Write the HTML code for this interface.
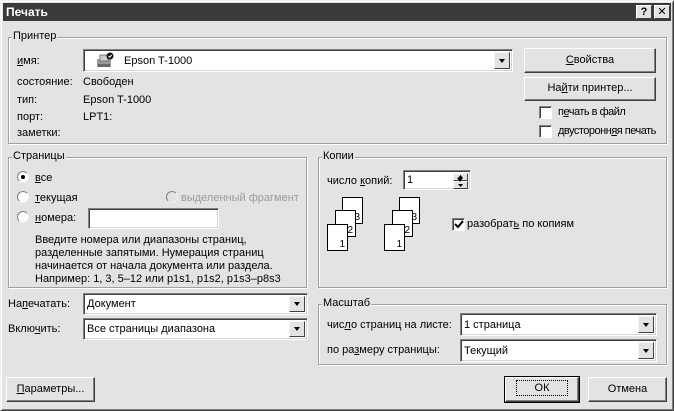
<!DOCTYPE html>
<html><head><meta charset="utf-8"><style>
*{box-sizing:border-box;margin:0;padding:0}
body{width:674px;height:411px;background:#e3e3e3;font-family:"Liberation Sans","DejaVu Sans",sans-serif;font-size:11px;color:#000;position:relative;overflow:hidden}
.a{position:absolute;white-space:nowrap}
.win{position:absolute;left:0;top:0;width:674px;height:411px;border:1px solid;border-color:#f0f0f0 #404040 #404040 #f0f0f0;box-shadow:inset 1px 1px 0 #fff,inset -1px -1px 0 #808080}
.title{position:absolute;left:3px;top:3px;width:668px;height:18px;background:#3a3a3a;color:#fff;font-weight:bold;font-size:12px;padding:2px 3px}
.tb{position:absolute;top:5px;width:16px;height:14px;background:#e3e3e3;border:1px solid;border-color:#fff #404040 #404040 #fff;font-weight:bold;font-size:11px;text-align:center;line-height:12px;color:#000}
.grp{position:absolute;border:1px solid #a0a0a0;box-shadow:1px 1px 0 #fff,inset 1px 1px 0 #fff}
.gl{position:absolute;background:#e3e3e3;padding:0 1px;top:-8px;left:3px}
.inp{position:absolute;background:#fff;border:1px solid;border-color:#808080 #fff #fff #808080;box-shadow:inset 1px 1px 0 #404040,inset -1px -1px 0 #d4d4d4;padding:4px 3px 3px;white-space:nowrap}
.dd{position:absolute;right:2px;top:2px;bottom:2px;width:16px;background:#e3e3e3;border:1px solid;border-color:#f4f4f4 #404040 #404040 #f4f4f4}
.dd:after{content:"";position:absolute;left:4px;top:50%;margin-top:-2px;border:3px solid transparent;border-top:4px solid #000;border-bottom:0}
.btn{position:absolute;background:#e3e3e3;border:1px solid;border-color:#fff #404040 #404040 #fff;box-shadow:inset -1px -1px 0 #808080;text-align:center}
.cb{position:absolute;width:13px;height:13px;background:#fff;border:1px solid;border-color:#808080 #fff #fff #808080;box-shadow:inset 1px 1px 0 #404040}
.rb{position:absolute;width:12px;height:12px;border-radius:50%;background:#fff;border:1px solid;border-color:#808080 #f0f0f0 #f0f0f0 #808080}
.pg{position:absolute;width:21px;height:27px;background:#fff;border:1px solid #000;font-size:10px;text-align:right;padding-right:2px;line-height:10px;padding-top:15px}
u{text-decoration:underline}
.n{letter-spacing:-0.5px}
</style></head><body>
<div class="win"></div>
<div class="title">Печать</div>
<div class="tb" style="left:636px">?</div>
<div class="tb" style="left:654px">✕</div>

<div class="grp" style="left:8px;top:37px;width:659px;height:107px"><span class="gl">Принтер</span></div>
<div class="a" style="left:17px;top:55px"><u>и</u>мя:</div>
<div class="inp" style="left:83px;top:49px;width:430px;height:23px;padding-left:40px;padding-top:5px">Epson T-1000<div class="dd"></div></div>
<svg class="a" style="left:95px;top:52px" width="20" height="17"><rect x="2" y="7" width="14" height="8" fill="#999"/><rect x="5" y="3" width="8" height="6" fill="#ccc" stroke="#777"/><rect x="3" y="12" width="12" height="3" fill="#666"/><circle cx="15" cy="4" r="3.5" fill="#111"/><path d="M13.5 4l1.2 1.3 2-2.3" stroke="#fff" fill="none"/></svg>
<div class="a" style="left:17px;top:76px">состояние:</div><div class="a" style="left:83px;top:76px">Свободен</div>
<div class="a" style="left:17px;top:94px">тип:</div><div class="a" style="left:83px;top:94px">Epson T-1000</div>
<div class="a" style="left:17px;top:111px">порт:</div><div class="a" style="left:83px;top:111px">LPT1:</div>
<div class="a" style="left:17px;top:127px">заметки:</div>
<div class="btn" style="left:524px;top:48px;width:132px;height:25px;line-height:22px"><u>С</u>войства</div>
<div class="btn" style="left:524px;top:77px;width:132px;height:24px;line-height:21px">На<u>й</u>ти принтер...</div>
<div class="cb" style="left:539px;top:106px"></div><div class="a n" style="left:558px;top:106px">п<u>е</u>чать в файл</div>
<div class="cb" style="left:539px;top:125px"></div><div class="a n" style="left:558px;top:125px">двусторонн<u>я</u>я печать</div>

<div class="grp" style="left:8px;top:157px;width:299px;height:131px"><span class="gl">Страницы</span></div>
<div class="rb" style="left:17px;top:171px"><div style="position:absolute;left:3px;top:3px;width:4px;height:4px;border-radius:50%;background:#000"></div></div>
<div class="a" style="left:35px;top:172px"><u>в</u>се</div>
<div class="rb" style="left:17px;top:191px"></div><div class="a" style="left:35px;top:192px"><u>т</u>екущая</div>
<div class="rb" style="left:166px;top:191px;background:#e3e3e3"></div><div class="a" style="left:181px;top:192px;color:#9a9a9a">выделенный фрагмент</div>
<div class="rb" style="left:17px;top:211px"></div><div class="a" style="left:35px;top:212px"><u>н</u>омера:</div>
<div class="inp" style="left:88px;top:208px;width:131px;height:21px"></div>
<div class="a" style="left:35px;top:234px;line-height:13px">Введите номера или диапазоны страниц,<br>разделенные запятыми. Нумерация страниц<br>начинается от начала документа или раздела.<br>Например: 1, 3, 5–12 или p1s1, p1s2, p1s3–p8s3</div>

<div class="grp" style="left:318px;top:157px;width:349px;height:131px"><span class="gl">Копии</span></div>
<div class="a" style="left:327px;top:175px">число <u>к</u>опий:</div>
<div class="inp" style="left:403px;top:170px;width:68px;height:20px;padding:3px 3px">1<div class="dd" style="width:15px;border:none;background:none"><div style="position:absolute;left:0;top:0;width:15px;height:8px;background:#e3e3e3;border:1px solid;border-color:#fff #404040 #404040 #fff"></div><div style="position:absolute;left:0;top:8px;width:15px;height:8px;background:#e3e3e3;border:1px solid;border-color:#fff #404040 #404040 #fff"></div><svg style="position:absolute;left:0;top:0" width="15" height="16"><path d="M5 5h5l-2.5-3z M5 11h5l-2.5 3z" fill="#000"/></svg></div></div>
<div class="pg" style="left:342px;top:197px">3</div><div class="pg" style="left:335px;top:210px">2</div><div class="pg" style="left:327px;top:224px">1</div>
<div class="pg" style="left:399px;top:197px">3</div><div class="pg" style="left:392px;top:210px">2</div><div class="pg" style="left:384px;top:224px">1</div>
<div class="cb" style="left:452px;top:218px"><svg style="position:absolute;left:1px;top:1px" width="10" height="10"><path d="M1 4l3 3 5-6" stroke="#000" stroke-width="2" fill="none"/></svg></div>
<div class="a" style="left:467px;top:218px">разобрат<u>ь</u> по копиям</div>

<div class="a" style="left:8px;top:298px">На<u>п</u>ечатать:</div>
<div class="inp" style="left:83px;top:293px;width:225px;height:22px">Документ<div class="dd"></div></div>
<div class="a" style="left:8px;top:323px">Вклю<u>ч</u>ить:</div>
<div class="inp" style="left:83px;top:318px;width:225px;height:22px">Все страницы диапазона<div class="dd"></div></div>

<div class="grp" style="left:318px;top:304px;width:349px;height:61px"><span class="gl">Масштаб</span></div>
<div class="a" style="left:327px;top:319px">чис<u>л</u>о страниц на листе:</div>
<div class="inp" style="left:460px;top:313px;width:197px;height:23px;padding-top:5px">1 страница<div class="dd"></div></div>
<div class="a" style="left:327px;top:344px">по ра<u>з</u>меру страницы:</div>
<div class="inp" style="left:460px;top:339px;width:197px;height:23px;padding-top:5px">Текущий<div class="dd"></div></div>

<div class="btn" style="left:6px;top:377px;width:89px;height:25px;line-height:22px"><u>П</u>араметры...</div>
<div class="btn" style="left:505px;top:377px;width:74px;height:25px;line-height:21px;outline:1px solid #000"><span style="border:1px dotted #000;padding:1px 18px">ОК</span></div>
<div class="btn" style="left:588px;top:377px;width:79px;height:25px;line-height:22px">Отмена</div>
</body></html>
